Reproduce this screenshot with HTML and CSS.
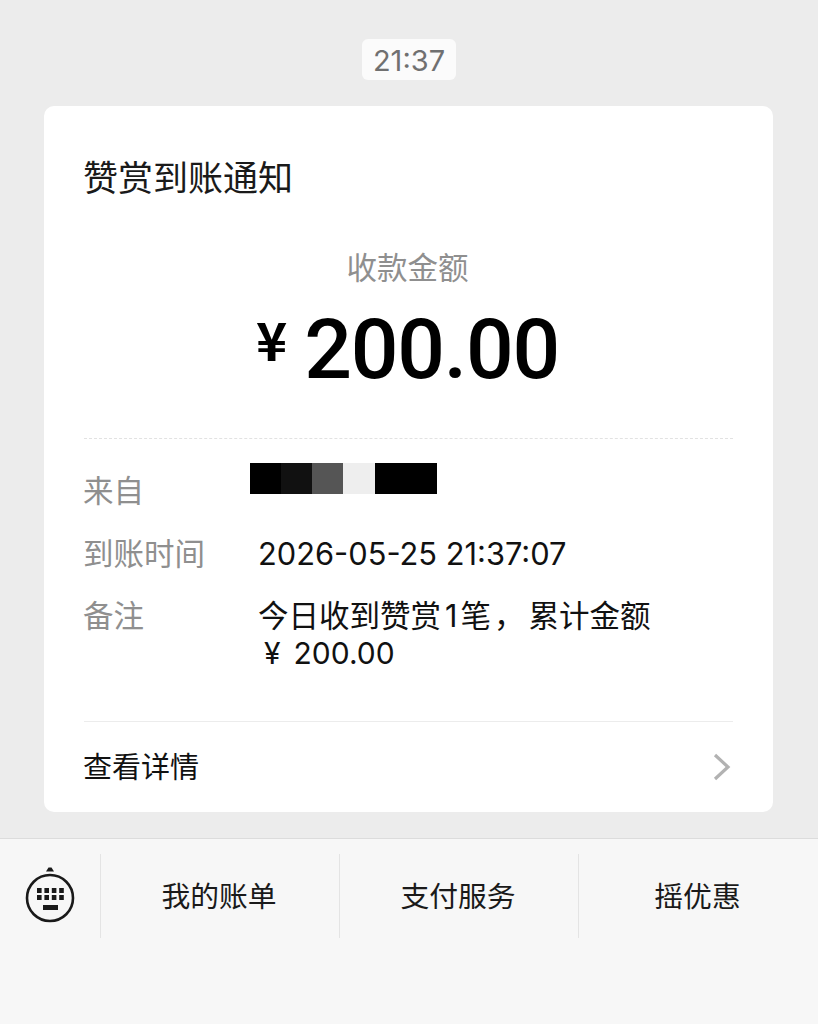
FILE: index.html
```html
<!DOCTYPE html>
<html lang="zh-CN">
<head>
<meta charset="utf-8">
<title>赞赏到账通知</title>
<link rel="stylesheet" href="styles.css">
</head>
<body>
<main class="chat">
  <div class="time-wrap"><span class="time">21:37</span></div>
  <article class="card">
    <h1 class="title">赞赏到账通知</h1>
    <div class="amount-label">收款金额</div>
    <div class="amount"><span class="yen">¥</span><span class="value">200.00</span></div>
    <div class="rows">
      <div class="row row-from">
        <div class="key">来自</div>
        <div class="mosaic"><i class="m1"></i><i class="m2"></i><i class="m3"></i><i class="m4"></i><i class="m5"></i></div>
      </div>
      <div class="row row-time">
        <div class="key">到账时间</div>
        <div class="val date">2026-05-25 21:37:07</div>
      </div>
      <div class="row row-note">
        <div class="key">备注</div>
        <div class="val note">今日收到赞赏<span class="one">1</span>笔<span class="comma">，</span>累计金额<br><span class="note-amt"><span class="note-yen">¥</span>200.00</span></div>
      </div>
    </div>
    <div class="detail">
      <span class="detail-text">查看详情</span>
      <svg class="chev" width="18" height="28" viewBox="0 0 18 28"><path d="M2 2 L15 14 L2 26" fill="none" stroke="#b2b2b2" stroke-width="3.2"/></svg>
    </div>
  </article>
</main>
<nav class="bar">
  <div class="kbd">
    <svg width="50" height="58" viewBox="0 0 50 58">
      <path d="M21 5.500 L23.500 1.500 H26.500 L29 5.500 Z" fill="#1a1a1a"/>
      <circle cx="25" cy="32" r="23" fill="none" stroke="#1a1a1a" stroke-width="2.600"/>
      <g fill="#1a1a1a">
        <rect x="12" y="22" width="4.600" height="5"/><rect x="19.400" y="22" width="4.600" height="5"/><rect x="26.800" y="22" width="4.600" height="5"/><rect x="34.200" y="22" width="4.600" height="5"/>
        <rect x="12" y="29" width="4.600" height="5"/><rect x="19.400" y="29" width="4.600" height="5"/><rect x="26.800" y="29" width="4.600" height="5"/><rect x="34.200" y="29" width="4.600" height="5"/>
        <rect x="18" y="39" width="15" height="5"/>
      </g>
    </svg>
  </div>
  <div class="tab">我的账单</div>
  <div class="tab">支付服务</div>
  <div class="tab">摇优惠</div>
</nav>
</body>
</html>
```
FILE: styles.css
```css
* { box-sizing: border-box; }
html, body { margin: 0; height: 100%; }
body {
  width: 818px; height: 1024px; overflow: hidden;
  background: #ececec;
  font-family: Inter, "Noto Sans CJK SC", sans-serif;
  color: #111;
  display: flex; flex-direction: column;
}
.chat { height: 838px; padding: 39px 45px 0 44px; }
.time-wrap { display: flex; justify-content: center; height: 67px; }
.time {
  width: 94px; height: 41px; margin-left: 1px;
  background: #fbfbfb; border-radius: 6px;
  font-size: 29px; line-height: 43px; text-align: center; color: #707070;
}
.card {
  height: 706px; background: #fff; border-radius: 10px;
  padding: 52px 40px 0;
}
.title { margin: 0 0 0 -1px; font-size: 35px; line-height: 40px; font-weight: 400; color: #1a1a1a; height: 40px; }
.amount-label { margin-top: 50px; padding-right: 2px; text-align: center; font-size: 30.500px; line-height: 40px; color: #8f8f8f; }
.amount {
  margin-top: 19px; height: 87px; padding-right: 2px; display: flex; justify-content: center; align-items: flex-start;
  color: #000; font-family: Roboto, sans-serif; font-weight: 500;
}
.yen { font-size: 53px; line-height: 56px; margin-right: 17px; margin-top: 3px; font-family: "Noto Sans CJK SC", sans-serif; font-weight: 700; }
.value { font-size: 84px; line-height: 86px; letter-spacing: -1.200px; }
.rows { margin-top: 44px; border-top: 1px dashed #e2e2e2; padding-top: 24px; height: 284px; border-bottom: 1px solid #ececec; }
.row { display: grid; grid-template-columns: 175px 1fr; font-size: 30.500px; line-height: 38px; }
.key { color: #8f8f8f; margin-left: -1px; }
.val { color: #111; margin-left: -1px; }
.row-from { height: 72px; }
.row-from .key { padding-top: 9px; }
.row-time { height: 62px; }
.date { font-size: 30.800px; }
.mosaic { display: flex; height: 31px; margin-left: -9px; }
.mosaic i { display: block; width: 31px; height: 31px; }
.mosaic .m1 { background: #000; }
.mosaic .m2 { background: #111; }
.mosaic .m3 { background: #555; }
.mosaic .m4 { background: #eee; width: 32px; }
.mosaic .m5 { background: #000; width: 62px; }
.note { line-height: 37px; }
.one { margin: 0 3px 0 4px; font-size: 30.500px; }
.comma { margin-left: 3px; letter-spacing: 4px; }
.note-amt { padding-left: 6px; font-size: 30px; }
.note-yen { margin-right: 13px; }
.detail {
  height: 90px; display: flex; justify-content: space-between; align-items: center;
  font-size: 29px; color: #111; padding: 0 2px 0 0;
}
.detail-text { margin: 0 0 4px -1px; }
.bar {
  flex: 1; background: #f7f7f7; border-top: 1px solid #dcdcdc;
  display: flex; align-items: flex-start; padding-top: 15px;
}
.kbd { width: 101px; height: 84px; border-right: 1px solid #e4e4e4; display: flex; justify-content: center; padding: 12px 1px 0 0; }
.tab {
  width: 239px; height: 84px; border-right: 1px solid #e4e4e4; padding-right: 2px;
  font-size: 28.800px; line-height: 85px; text-align: center; color: #1a1a1a;
}
.tab:last-child { border-right: 0; }
```
